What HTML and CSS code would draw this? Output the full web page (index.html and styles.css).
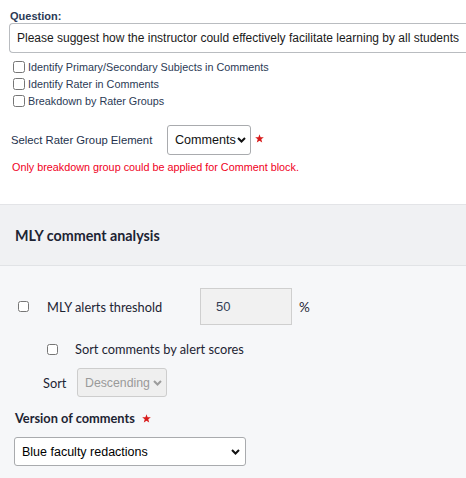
FILE: index.html
```html
<!DOCTYPE html>
<html>
<head>
<meta charset="utf-8">
<link rel="stylesheet" href="styles.css">
</head>
<body>
<div class="top">
  <div class="q-label">Question:</div>
  <div class="q-box">Please suggest how the instructor could effectively facilitate learning by all students</div>
  <div class="checks">
    <label class="check-row"><input type="checkbox" class="cb">Identify Primary/Secondary Subjects in Comments</label>
    <label class="check-row"><input type="checkbox" class="cb">Identify Rater in Comments</label>
    <label class="check-row"><input type="checkbox" class="cb">Breakdown by Rater Groups</label>
  </div>
  <div class="rater-row">
    <span class="rater-label">Select Rater Group Element</span>
    <div class="sel rater-select">
      <span>Comments</span>
      <svg class="chev" width="9" height="6" viewBox="0 0 9 6"><path d="M1 1 L4.5 4.5 L8 1" fill="none" stroke="#111" stroke-width="2"/></svg>
    </div>
    <svg class="star" width="9" height="9" viewBox="0 0 10 10"><polygon points="5,0.3 6.2,3.6 9.8,3.7 7,5.9 8,9.5 5,7.4 2,9.5 3,5.9 0.2,3.7 3.8,3.6" fill="#d81b1b"/></svg>
  </div>
  <div class="warn">Only breakdown group could be applied for Comment block.</div>
</div>
<div class="section">
  <div class="sec-head">MLY comment analysis</div>
  <div class="sec-body">
    <div class="row row-threshold">
      <input type="checkbox" class="cb2">
      <span class="thr-label">MLY alerts threshold</span>
      <div class="thr-input">50</div>
      <span class="pct">%</span>
    </div>
    <div class="row row-sortcb">
      <input type="checkbox" class="cb2">
      <span class="sortcb-label">Sort comments by alert scores</span>
    </div>
    <div class="row row-sort">
      <span class="sort-label">Sort</span>
      <div class="sel sort-select">
        <span>Descending</span>
        <svg class="chev" width="9" height="6" viewBox="0 0 9 6"><path d="M1 1 L4.5 4.5 L8 1" fill="none" stroke="#9c9c9c" stroke-width="2"/></svg>
      </div>
    </div>
    <div class="version-label">Version of comments
      <svg class="star2" width="9" height="9" viewBox="0 0 10 10"><polygon points="5,0.3 6.2,3.6 9.8,3.7 7,5.9 8,9.5 5,7.4 2,9.5 3,5.9 0.2,3.7 3.8,3.6" fill="#d81b1b"/></svg>
    </div>
    <div class="sel version-select">
      <span>Blue faculty redactions</span>
      <svg class="chev" width="9" height="6" viewBox="0 0 9 6"><path d="M1 1 L4.5 4.5 L8 1" fill="none" stroke="#111" stroke-width="2"/></svg>
    </div>
  </div>
</div>
</body>
</html>
```
FILE: styles.css
```css
html, body {
  margin: 0;
  padding: 0;
  width: 466px;
  height: 478px;
  overflow: hidden;
  background: #f6f7f9;
  font-family: "Liberation Sans", Arial, sans-serif;
}
.top {
  box-sizing: border-box;
  height: 204px;
  padding: 10px 0 0 9px;
  background: #ffffff;
  overflow: hidden;
}
.q-label {
  font-size: 11px;
  font-weight: bold;
  line-height: 13px;
  color: #2b3a55;
  margin-left: 1px;
}
.q-box {
  box-sizing: border-box;
  width: 470px;
  height: 30px;
  border: 1px solid #b9bcc0;
  border-right: none;
  border-radius: 4px 0 0 4px;
  padding: 0 7px;
  font-size: 12px;
  line-height: 28px;
  color: #1a1a1a;
  white-space: nowrap;
}
.checks {
  margin-top: 5px;
  display: flex;
  flex-direction: column;
}
.check-row {
  display: flex;
  align-items: center;
  height: 17px;
  font-size: 10.8px;
  color: #2b3a55;
}
.cb {
  width: 12px;
  height: 12px;
  margin: 0 3px 0 4px;
}
.rater-row {
  margin-top: 16px;
  display: flex;
  align-items: center;
  height: 29px;
}
.rater-label {
  width: 156px;
  margin-left: 2px;
  font-size: 11.3px;
  color: #24324d;
}
.sel {
  box-sizing: border-box;
  display: flex;
  align-items: center;
  justify-content: space-between;
  font-family: "Liberation Sans", Arial, sans-serif;
  white-space: nowrap;
  border-radius: 3px;
}
.rater-select {
  width: 84px;
  height: 30px;
  font-size: 12.6px;
  color: #111;
  background: #fff;
  border: 1px solid #a9abae;
  padding: 0 4px 0 7px;
}
.star {
  margin-left: 4px;
  margin-top: -2px;
}
.warn {
  margin-top: 7px;
  margin-left: 3px;
  font-size: 10.8px;
  line-height: 13px;
  color: #f0001c;
}
.section {
  border-top: 1px solid #e3e4e7;
}
.sec-head {
  box-sizing: border-box;
  height: 61px;
  background: #f0f1f3;
  border-bottom: 1px solid #e1e3e6;
  padding: 2px 0 0 15px;
  font-family: Lato, sans-serif;
  font-weight: bold;
  font-size: 14.3px;
  line-height: 58px;
  color: #1d2433;
}
.sec-body {
  font-family: Lato, sans-serif;
  font-size: 12.8px;
  color: #1d2433;
}
.row {
  display: flex;
  align-items: center;
}
.cb2 {
  width: 11px;
  height: 11px;
  margin: 0;
}
.row-threshold {
  margin-top: 22px;
  height: 37px;
  padding-left: 18px;
}
.thr-label {
  margin-left: 18px;
  width: 153px;
}
.thr-input {
  box-sizing: border-box;
  width: 92px;
  height: 37px;
  background: #f1f1f1;
  border: 1px solid #cfcfcf;
  padding-left: 15px;
  line-height: 35px;
  color: #333d55;
  font-family: "Liberation Sans", Arial, sans-serif;
  font-size: 13px;
}
.pct {
  margin-left: 7px;
  font-size: 13.5px;
}
.row-sortcb {
  margin-top: 14px;
  height: 20px;
  padding-left: 47px;
}
.sortcb-label {
  margin-left: 17px;
}
.row-sort {
  margin-top: 9px;
  height: 29px;
  padding-left: 43px;
}
.sort-label {
  width: 34px;
}
.sort-select {
  width: 90px;
  height: 29px;
  font-size: 12.3px;
  color: #9a9a9a;
  background: #efefef;
  border: 1px solid #cdcdcd;
  padding: 0 4px 0 7px;
}
.version-label {
  margin-top: 13px;
  margin-left: 15px;
  line-height: 17px;
  font-weight: bold;
  font-size: 12.8px;
  display: flex;
  align-items: center;
}
.star2 {
  margin-left: 7px;
}
.version-select {
  margin-top: 10px;
  margin-left: 14px;
  width: 232px;
  height: 29px;
  font-size: 12.5px;
  color: #000;
  background: #fff;
  border: 1px solid #a9abae;
  padding: 0 5px 0 7px;
}
```
